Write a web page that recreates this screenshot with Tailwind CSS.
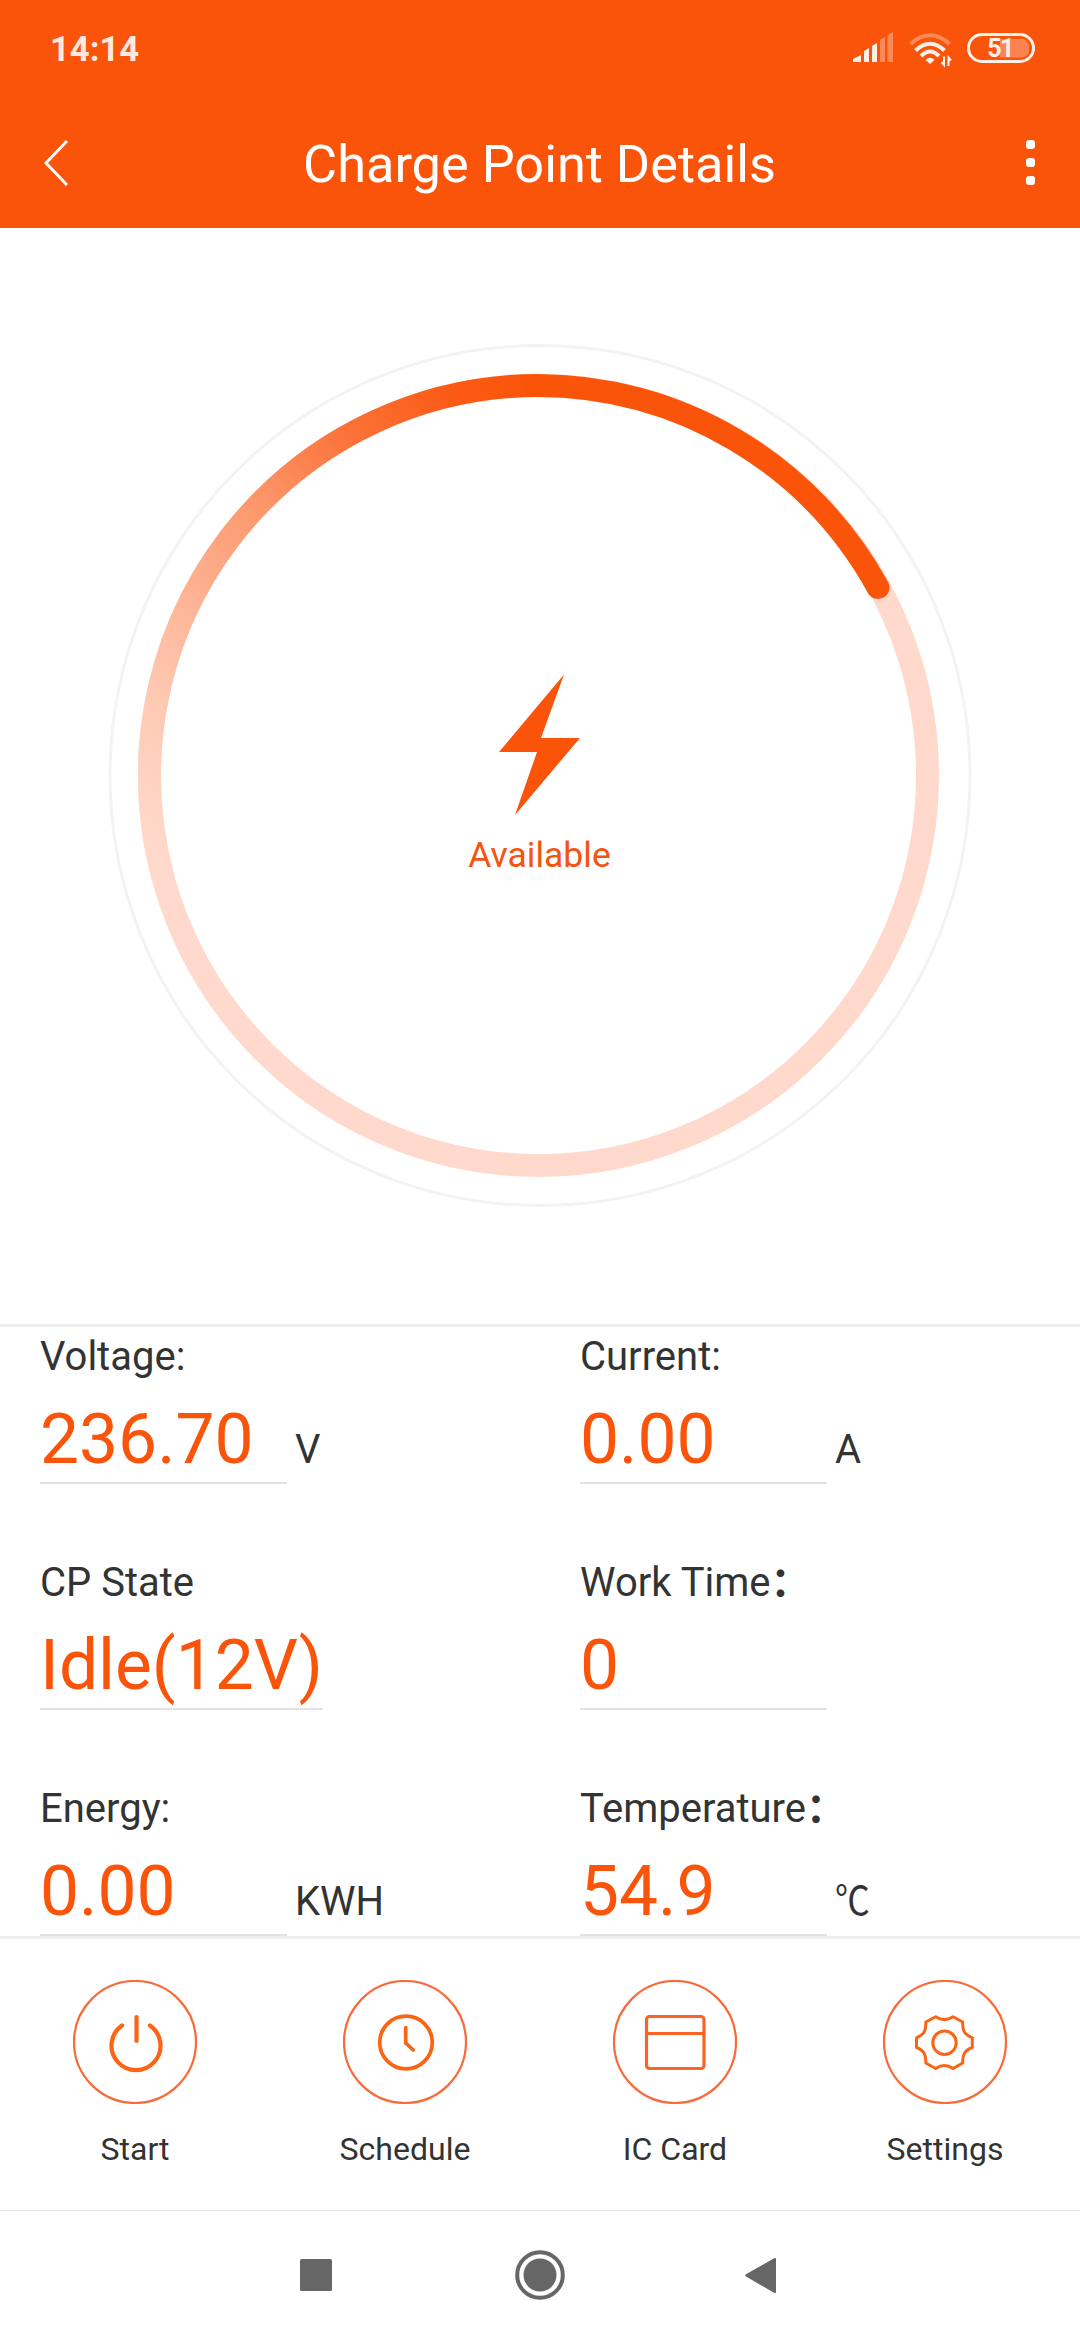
<!DOCTYPE html>
<html lang="en">
<head>
<meta charset="utf-8">
<title>Charge Point Details</title>
<script src="https://cdn.jsdelivr.net/npm/@tailwindcss/browser@4"></script>
</head>
<body class="w-[1080px] h-[2340px] overflow-hidden bg-white flex flex-col text-[#333] font-[Roboto,'Noto_Sans_CJK_SC',sans-serif]">
<header class="h-[228px] shrink-0 bg-[#fa540a] text-white flex flex-col">
  <div class="h-24 shrink-0 flex items-center justify-between pl-[50px] pr-11">
    <span class="text-[34.6px] leading-10 font-bold text-[#ffe9df] pt-[2px]">14:14</span>
    <svg class="w-[184px] h-10" viewBox="852 28 184 40" fill="none">
      <g fill="#fff0e8"><path d="M853 62v-3l8-4v7zM864 62V51l5-3v14zM872 62V46l5-3v19z"/><path opacity=".35" d="M880 62V40l5-3v25zM887.500 62V35l5.500-3v30z"/></g>
      <g stroke="#fff0e8" stroke-width="4"><path opacity=".35" d="M910.500 44Q930 26.500 949.500 44"/><path d="M915.500 50.500Q930 37 944.500 50.500M921 56Q930 47 939 56"/></g>
      <path d="M925.500 60q4.500-4.500 9 0l-4.500 4z" fill="#fff0e8"/>
      <path d="M944 56.500v8.500l-2.500-3M948.500 66v-8.500l2.500 3" stroke="#fff0e8" stroke-width="2"/>
      <path d="M1000 39h22a7 7 0 0 1 7 7v4.500a7 7 0 0 1-7 7h-22z" fill="#fd8452"/>
      <rect x="968.500" y="34.500" width="65" height="27" rx="13.500" stroke="#fff0e8" stroke-width="3"/>
      <text x="1000" y="57" text-anchor="middle" font-family="Roboto" font-weight="700" font-size="25" letter-spacing="-1.500" fill="#fff0e8">51</text>
    </svg>
  </div>
  <div class="flex-1 grid grid-cols-[60px_1fr_60px] items-center pl-11 pr-[45px]">
    <svg class="w-6 h-12" viewBox="0 0 24 48" fill="none" stroke="#fff" stroke-width="3"><path d="M23 3 2 25l21 22"/></svg>
    <h1 class="text-[52.3px] leading-[60px] pt-1 text-center whitespace-nowrap">Charge Point Details</h1>
    <div class="flex flex-col items-end gap-[9px] pt-px"><i class="size-[9px] rounded-[3px] bg-white"></i><i class="size-[9px] rounded-[3px] bg-white"></i><i class="size-[9px] rounded-[3px] bg-white"></i></div>
  </div>
</header>

<section class="h-[1096px] shrink-0">
  <svg class="w-full h-full" viewBox="0 228 1080 1096" fill="none">
    <defs><linearGradient id="fade" gradientUnits="userSpaceOnUse" x1="539" y1="386" x2="111" y2="814">
      <stop offset="0" stop-color="#fa540a"/><stop offset=".11" stop-color="#fb5a14"/><stop offset=".29" stop-color="#fc743c"/><stop offset=".45" stop-color="#fc9468"/><stop offset=".62" stop-color="#fdae8c"/><stop offset=".77" stop-color="#fec4ac"/><stop offset=".91" stop-color="#ffd2c0"/><stop offset="1" stop-color="#ffdacc"/>
    </linearGradient></defs>
    <circle cx="540" cy="775.500" r="430" stroke="#f3f3f3" stroke-width="3"/>
    <ellipse cx="538.500" cy="775.500" rx="389" ry="390" stroke="#ffdacc" stroke-width="23"/>
    <path d="M162.700 876.500A389 390 0 0 1 538.500 385.500" stroke="url(#fade)" stroke-width="23"/>
    <path d="M537.500 385.500A389 390 0 0 1 878 587.500" stroke="#fa540a" stroke-width="23" stroke-linecap="round"/>
    <path d="M564 674.500 541 738h39l-65 77 22-63h-38z" fill="#fa540a"/>
    <text x="539.500" y="867" text-anchor="middle" font-family="Roboto" font-size="35.500" fill="#f4540f">Available</text>
  </svg>
</section>

<main class="h-[612px] shrink-0 overflow-hidden border-t-[3px] border-[#eee] px-10 pt-[6px] grid grid-cols-2 gap-x-0 auto-rows-[226px] text-[40px] leading-[48px]">
  <div><div>Voltage:</div><div class="flex items-end gap-2"><b class="font-normal text-[69.5px] leading-[80px] text-[#fa540a] min-w-[247px] h-[103px] pt-[19px] border-b-2 border-[#e2e2e2]">236.70</b><span class="pb-[10px]">V</span></div></div>
  <div class="pl-10"><div>Current:</div><div class="flex items-end gap-2"><b class="font-normal text-[69.5px] leading-[80px] text-[#fa540a] min-w-[247px] h-[103px] pt-[19px] border-b-2 border-[#e2e2e2]">0.00</b><span class="pb-[10px]">A</span></div></div>
  <div><div>CP State</div><div class="flex items-end gap-2"><b class="font-normal text-[69.5px] leading-[80px] text-[#fa540a] min-w-[247px] h-[103px] pt-[19px] border-b-2 border-[#e2e2e2]">Idle(12V)</b></div></div>
  <div class="pl-10"><div class="h-12">Work Time<span class="font-bold">：</span></div><div class="flex items-end gap-2"><b class="font-normal text-[69.5px] leading-[80px] text-[#fa540a] min-w-[247px] h-[103px] pt-[19px] border-b-2 border-[#e2e2e2]">0</b></div></div>
  <div><div>Energy:</div><div class="flex items-end gap-2"><b class="font-normal text-[69.5px] leading-[80px] text-[#fa540a] min-w-[247px] h-[103px] pt-[19px] border-b-2 border-[#e2e2e2]">0.00</b><span class="pb-[10px]">KWH</span></div></div>
  <div class="pl-10"><div class="h-12">Temperature<span class="font-bold">：</span></div><div class="flex items-end gap-2"><b class="font-normal text-[69.5px] leading-[80px] text-[#fa540a] min-w-[247px] h-[103px] pt-[19px] border-b-2 border-[#e2e2e2]">54.9</b><span class="h-[58px] inline-block origin-left scale-x-[.87]">℃</span></div></div>
</main>

<nav class="h-[274px] shrink-0 border-t-[3px] border-[#eee] pt-[41px] grid grid-cols-4 text-[32px] leading-10 text-center">
  <div class="flex flex-col items-center gap-[25px]">
    <svg class="size-[124px]" viewBox="73 1980 124 124" fill="none" stroke="#fb6414" stroke-linecap="round"><circle cx="135" cy="2042" r="61" stroke="#f96a38" stroke-width="2.200"/><path stroke-width="4.200" d="M122 2025.500a24.500 24.500 0 1 0 28 0M136.500 2017v24"/></svg>
    <span>Start</span></div>
  <div class="flex flex-col items-center gap-[25px]">
    <svg class="size-[124px]" viewBox="343 1980 124 124" fill="none" stroke="#fb6414" stroke-linecap="round"><circle cx="405" cy="2042" r="61" stroke="#f96a38" stroke-width="2.200"/><g stroke-width="3.700"><circle cx="406" cy="2042.500" r="26.300"/><path d="M405.700 2027.500v15.500l7.500 7"/></g></svg>
    <span>Schedule</span></div>
  <div class="flex flex-col items-center gap-[25px]">
    <svg class="size-[124px]" viewBox="613 1980 124 124" fill="none" stroke="#fa6427" stroke-linecap="round"><circle cx="675" cy="2042" r="61" stroke="#f96a38" stroke-width="2.200"/><g stroke-width="3.200"><rect x="646.500" y="2016.500" width="57.500" height="52" rx="3"/><path d="M647 2033.500h57"/></g></svg>
    <span>IC Card</span></div>
  <div class="flex flex-col items-center gap-[25px]">
    <svg class="size-[124px]" viewBox="883 1980 124 124" fill="none" stroke="#fb6414" stroke-linejoin="round"><circle cx="945" cy="2042" r="61" stroke="#f96a38" stroke-width="2.200"/><g stroke-width="3"><circle cx="944.500" cy="2042.700" r="11.700"/><path d="M935.700 2016.700Q944.300 2022.500 953 2016.700L962.700 2022C962.300 2031 964.500 2034.500 972.300 2037.800V2047.500C964.500 2050.500 962.300 2054.500 962.700 2063L953 2068.500Q944.300 2062.500 935.700 2068.500L925.800 2063C926.200 2054.500 924 2050.500 916.500 2047.500V2037.800C924 2034.500 926.200 2031 925.800 2022Z"/></g></svg>
    <span>Settings</span></div>
</nav>

<footer class="flex-1 border-t border-[#e2e2e2]">
  <svg class="w-full h-[129px]" viewBox="0 2211 1080 129" fill="#666"><rect x="300" y="2259" width="32" height="32" rx="1.500"/><circle cx="540" cy="2275" r="16.500"/><circle cx="540" cy="2275" r="22.800" fill="none" stroke="#666" stroke-width="4"/><path d="M746 2274.300 774.500 2258q1.500-.5 1.500 1v33q0 1.500-1.500 1L746 2276.500q-1.500-1.100 0-2.200z"/></svg>
</footer>
</body>
</html>
